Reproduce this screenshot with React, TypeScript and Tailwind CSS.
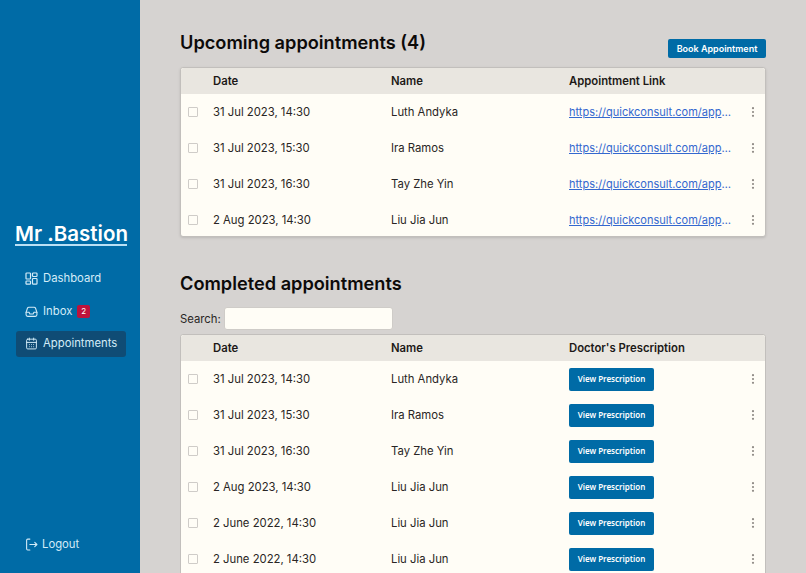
import { CalendarDays } from "lucide-react";

const upcoming = [
  ["31 Jul 2023, 14:30", "Luth Andyka"],
  ["31 Jul 2023, 15:30", "Ira Ramos"],
  ["31 Jul 2023, 16:30", "Tay Zhe Yin"],
  ["2 Aug 2023, 14:30", "Liu Jia Jun"],
];
const completed = [
  ...upcoming,
  ["2 June 2022, 14:30", "Liu Jia Jun"],
  ["2 June 2022, 14:30", "Liu Jia Jun"],
];

function Dots() {
  return (
    <svg width="4" height="10" viewBox="0 0 4 10" className="text-[#8f8a85]" fill="currentColor">
      <circle cx="2" cy="1.2" r="1.1" />
      <circle cx="2" cy="5" r="1.1" />
      <circle cx="2" cy="8.8" r="1.1" />
    </svg>
  );
}

function Row({ date, name, children }: { date: string; name: string; children: React.ReactNode }) {
  return (
    <div className="grid grid-cols-[32px_178px_178px_1fr_32px] items-center h-[36px]">
      <div className="pl-[7px]">
        <div className="w-[8px] h-[8px] rounded-[1px] border border-[#cfccc8] bg-[#fffdf6] box-content" />
      </div>
      <div>{date}</div>
      <div>{name}</div>
      <div className="min-w-0">{children}</div>
      <div className="flex justify-end pr-[10px]">
        <Dots />
      </div>
    </div>
  );
}

function Head({ label }: { label: string }) {
  return (
    <div className="grid grid-cols-[32px_178px_178px_1fr_32px] items-center h-[26px] bg-[#e9e6e0] font-semibold text-[#1c1917] rounded-t-[3px]">
      <div />
      <div>Date</div>
      <div>Name</div>
      <div>{label}</div>
      <div />
    </div>
  );
}

function Nav({ icon, label, active, badge }: { icon: React.ReactNode; label: string; active?: boolean; badge?: string }) {
  return (
    <div className={`flex items-center gap-[5px] h-[26px] pl-[9px] rounded-[3px] ${active ? "bg-[#0f4c75]" : ""}`}>
      {icon}
      <span>{label}</span>
      {badge && (
        <span className="w-[13px] h-[13px] rounded-[2px] bg-[#be123c] text-white text-[8px] flex items-center justify-center">{badge}</span>
      )}
    </div>
  );
}

export default function App() {
  return (
    <div className="h-screen flex overflow-hidden bg-[#d6d3d1] font-['Inter',sans-serif] text-[11.3px] text-[#292524]">
      <aside className="w-[140px] shrink-0 bg-[#006ba6] flex flex-col text-[#d4ecf8]">
        <div className="flex-1 flex flex-col justify-center pl-[16px] pr-[14px] pt-[46px]">
          <div className="text-white text-[20.5px] leading-[20px] font-semibold text-center border-b-2 border-[#bae0f5] w-[112px] -ml-[1px] whitespace-nowrap">Mr .Bastion</div>
          <div className="flex flex-col gap-[6.5px] mt-[20px]">
            <Nav
              label="Dashboard"
              icon={
                <svg width="13" height="13" viewBox="0 0 13 13" fill="none" stroke="currentColor" strokeWidth="1.2" strokeLinejoin="round" className="shrink-0">
                  <rect x="1" y="1" width="4.5" height="6" rx="0.8" />
                  <rect x="7.5" y="1" width="4.5" height="3.5" rx="0.8" />
                  <rect x="1" y="9" width="4.5" height="3.2" rx="0.8" />
                  <rect x="7.5" y="6.5" width="4.5" height="5.7" rx="0.8" />
                </svg>
              }
            />
            <Nav
              label="Inbox"
              badge="2"
              icon={
                <svg width="13" height="13" viewBox="0 0 24 24" fill="none" stroke="currentColor" strokeWidth="2" strokeLinecap="round" strokeLinejoin="round" className="shrink-0">
                  <path d="M2 13.5V18a3 3 0 0 0 3 3h14a3 3 0 0 0 3-3v-4.5L19.5 6a3 3 0 0 0-2.8-2H7.3a3 3 0 0 0-2.8 2L2 13.5Z" />
                  <path d="M2 13.5h5.5l1.5 3h6l1.5-3H22" />
                </svg>
              }
            />
            <Nav label="Appointments" active icon={<CalendarDays size={13} strokeWidth={1.8} className="shrink-0" />} />
          </div>
        </div>
        <div className="flex items-center gap-[5px] pl-[25px] h-[20px] mb-[19px]">
          <svg width="13" height="13" viewBox="0 0 24 24" fill="none" stroke="currentColor" strokeWidth="2" strokeLinecap="round" strokeLinejoin="round">
            <path d="M9 2H5a2 2 0 0 0-2 2v16a2 2 0 0 0 2 2h4" />
            <path d="M9 12h13M18 8l4 4-4 4" />
          </svg>
          <span className="-ml-[1px]">Logout</span>
        </div>
      </aside>
      <main className="flex-1 min-w-0 pl-[40px] pr-[40px]">
        <div className="flex justify-between items-end pt-[30px] h-[67px] pb-[9px]">
          <h1 className="text-[18.2px] leading-[24px] font-semibold text-[#0c0a09] self-start">Upcoming appointments (4)</h1>
          <button className="h-[19px] w-[98px] rounded-[2px] bg-[#006ba6] text-white text-[9px] font-semibold">Book Appointment</button>
        </div>
        <div className="border border-[#c2bfbc] rounded-[3px] bg-[#fffdf6] shadow-sm overflow-hidden h-[170px]">
          <Head label="Appointment Link" />
          {upcoming.map(([d, n]) => (
            <Row key={d} date={d} name={n}>
              <div className="truncate text-[#3468cf] underline w-[164px] text-[11px]">https://quickconsult.com/appointments/1234</div>
            </Row>
          ))}
        </div>
        <h2 className="text-[18.2px] leading-[24px] font-semibold text-[#0c0a09] mt-[34px]">Completed appointments</h2>
        <div className="flex items-center gap-[3px] mt-[12px] mb-[4px]">
          <span className="pt-[2px]">Search:</span>
          <input className="w-[169px] h-[23px] rounded-[3px] border border-[#cfccc8] bg-[#fffdf6]" />
        </div>
        <div className="border border-[#c2bfbc] rounded-[3px] bg-[#fffdf6] overflow-hidden">
          <Head label="Doctor's Prescription" />
          {completed.map(([d, n], i) => (
            <Row key={i} date={d} name={n}>
              <button className="w-[85px] h-[23px] rounded-[2px] bg-[#006ba6] text-white text-[8px] font-semibold font-['Noto_Sans',sans-serif]">View Prescription</button>
            </Row>
          ))}
        </div>
      </main>
    </div>
  );
}
